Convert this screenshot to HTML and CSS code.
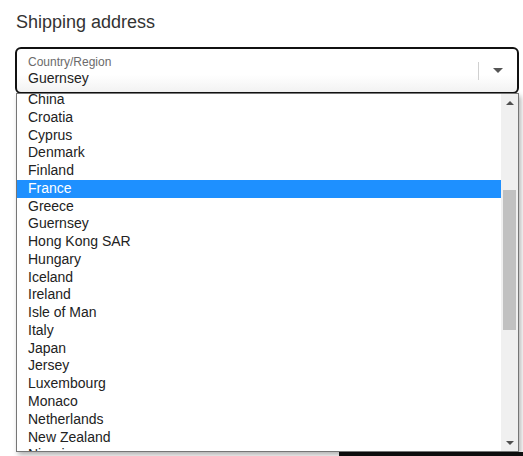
FILE: index.html
```html
<!DOCTYPE html>
<html lang="en">
<head>
<meta charset="utf-8">
<title>Shipping address</title>
<link rel="stylesheet" href="styles.css">
</head>
<body>
<main class="page">
  <h2 class="title">Shipping address</h2>
  <div class="field">
    <div class="select">
      <div class="select-text">
        <span class="select-label">Country/Region</span>
        <span class="select-value">Guernsey</span>
      </div>
      <span class="select-sep"></span>
      <span class="select-arrow"></span>
    </div>
    <div class="dropdown">
      <div class="list">
        <ul class="options">
          <li>China</li>
          <li>Croatia</li>
          <li>Cyprus</li>
          <li>Denmark</li>
          <li>Finland</li>
          <li class="active">France</li>
          <li>Greece</li>
          <li>Guernsey</li>
          <li>Hong Kong SAR</li>
          <li>Hungary</li>
          <li>Iceland</li>
          <li>Ireland</li>
          <li>Isle of Man</li>
          <li>Italy</li>
          <li>Japan</li>
          <li>Jersey</li>
          <li>Luxembourg</li>
          <li>Monaco</li>
          <li>Netherlands</li>
          <li>New Zealand</li>
          <li>Nigeria</li>
        </ul>
      </div>
      <div class="scrollbar">
        <span class="sb-btn"><span class="tri-up"></span></span>
        <span class="sb-gap"></span>
        <span class="sb-thumb"></span>
        <span class="sb-fill"></span>
        <span class="sb-btn"><span class="tri-down"></span></span>
      </div>
    </div>
  </div>
  <div class="below">
    <div class="btn-dark"></div>
  </div>
</main>
</body>
</html>
```

FILE: styles.css
```css
html, body {
  margin: 0;
  padding: 0;
  background: #fff;
  overflow: hidden;
}
body {
  font-family: "Liberation Sans", Arial, sans-serif;
  color: #222;
}
.page {
  padding: 0 4px 0 15px;
}
.title {
  margin: 0;
  padding-top: 12px;
  padding-left: 1px;
  font-size: 18px;
  font-weight: normal;
  line-height: 21px;
  color: #333;
}
.field {
  position: relative;
  margin-top: 14px;
}
.select {
  box-sizing: border-box;
  height: 47px;
  border: 2px solid #111;
  border-radius: 6px;
  display: flex;
  align-items: center;
  background: linear-gradient(#fff 60%, #f2f2f2);
}
.select-text {
  flex: 1;
  display: flex;
  flex-direction: column;
  padding-left: 11px;
  padding-top: 1px;
}
.select-label {
  font-size: 12px;
  line-height: 15px;
  color: #6b6b6b;
}
.select-value {
  font-size: 14px;
  line-height: 17px;
  color: #222;
}
.select-sep {
  width: 1px;
  height: 18px;
  background: #d0d0d0;
  margin-right: 14px;
}
.select-arrow {
  width: 0;
  height: 0;
  border-left: 5px solid transparent;
  border-right: 5px solid transparent;
  border-top: 5px solid #555;
  margin-right: 14px;
}
.dropdown {
  position: absolute;
  left: 1px;
  top: 46px;
  width: 503px;
  height: 359px;
  box-sizing: border-box;
  border: 1px solid #767676;
  background: #fff;
  box-shadow: 2px 3px 5px rgba(0, 0, 0, 0.3);
  display: flex;
  z-index: 2;
}
.list {
  flex: 1;
  overflow: hidden;
}
.options {
  list-style: none;
  margin: -3px 0 0 0;
  padding: 0;
}
.options li {
  height: 17.78px;
  line-height: 17.78px;
  font-size: 14px;
  padding-left: 11px;
  color: #222;
  white-space: nowrap;
}
.options li.active {
  background: #1e90ff;
  color: #fff;
}
.scrollbar {
  width: 17px;
  background: #f0f0f0;
  display: flex;
  flex-direction: column;
  align-items: center;
}
.sb-btn {
  height: 17px;
  width: 17px;
  display: flex;
  align-items: center;
  justify-content: center;
  flex: none;
}
.tri-up {
  width: 0;
  height: 0;
  border-left: 4px solid transparent;
  border-right: 4px solid transparent;
  border-bottom: 4px solid #505050;
}
.tri-down {
  width: 0;
  height: 0;
  border-left: 4px solid transparent;
  border-right: 4px solid transparent;
  border-top: 4px solid #505050;
}
.sb-gap {
  height: 79px;
  flex: none;
}
.sb-thumb {
  width: 13px;
  height: 140px;
  background: #c1c1c1;
  flex: none;
}
.sb-fill {
  flex: 1;
}
.below {
  margin-top: 358px;
  display: flex;
  justify-content: flex-end;
  margin-right: -4px;
}
.btn-dark {
  width: 184px;
  height: 4px;
  background: #111;
}
```
